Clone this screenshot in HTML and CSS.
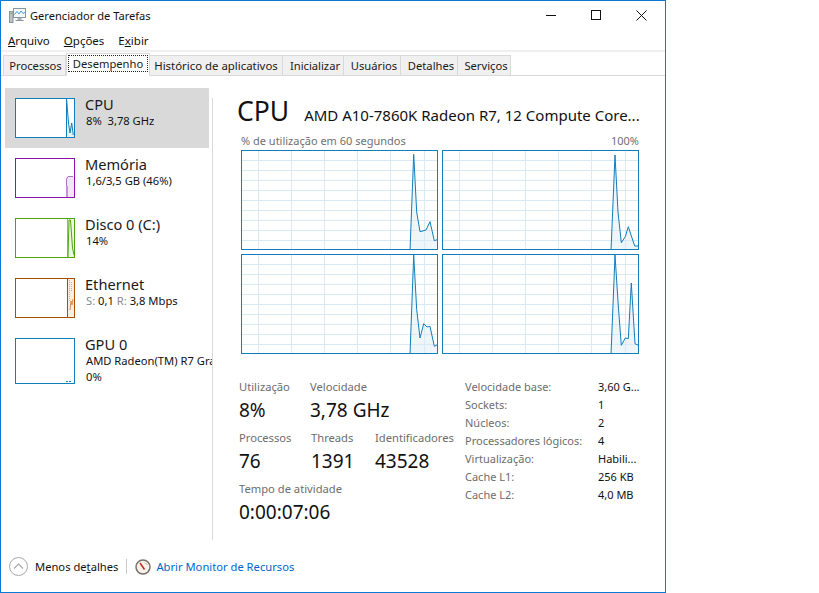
FILE: index.html
```html
<!DOCTYPE html>
<html lang="pt-BR">
<head>
<meta charset="utf-8">
<title>Gerenciador de Tarefas</title>
<link rel="stylesheet" href="styles.css">
</head>
<body>
<svg class="defs" width="0" height="0" aria-hidden="true">
  <defs>
    <g id="grid-lines">
      <path d="M16.500 0V101M49.500 0V101M82.500 0V101M115.500 0V101M148.500 0V101M182.500 0V101" stroke="#d9eaf4" fill="none"/>
      <path d="M0 9.500H197M0 19.500H197M0 29.500H197M0 39.500H197M0 49.500H197M0 59.500H197M0 69.500H197M0 79.500H197M0 89.500H197" stroke="#d9eaf4" fill="none"/>
    </g>
  </defs>
</svg>
<div class="window">
  <header class="titlebar">
    <svg class="app-icon" width="17" height="15" viewBox="0 0 17 15">
      <rect x="4.500" y="0.500" width="12" height="9" fill="#f4f9fc" stroke="#8a949a"/>
      <path d="M5.500 6.500 8 3.500l2 2.500 2-3 2 2.500 2-1" fill="none" stroke="#4f9fd0"/>
      <path d="M8.500 10h4v2h-4z" fill="#a8b0b5"/>
      <path d="M6.500 12.500h8" stroke="#8a949a"/>
      <rect x="0.500" y="3.500" width="3.500" height="11" fill="#b9c3c8" stroke="#8a949a"/>
      <path d="M1.500 5.500h1.500" stroke="#6fae3c"/>
    </svg>
    <span class="title">Gerenciador de Tarefas</span>
    <div class="caption">
      <svg width="10" height="10" viewBox="0 0 10 10"><path d="M0 5.500H10" stroke="#111"/></svg>
      <svg width="10" height="10" viewBox="0 0 10 10"><rect x=".5" y=".5" width="9" height="9" fill="none" stroke="#111"/></svg>
      <svg width="11" height="11" viewBox="0 0 11 11"><path d="M.5 .5l10 10M10.500 .5l-10 10" stroke="#111" fill="none"/></svg>
    </div>
  </header>
  <nav class="menubar">
    <span><u>A</u>rquivo</span>
    <span><u>O</u>pções</span>
    <span>E<u>x</u>ibir</span>
  </nav>
  <div class="tabs">
    <div class="tab tab-w1">Processos</div>
    <div class="tab tab-active"><span class="focus">Desempenho</span></div>
    <div class="tab tab-w3">Histórico de aplicativos</div>
    <div class="tab tab-w4">Inicializar</div>
    <div class="tab tab-w5">Usuários</div>
    <div class="tab tab-w5">Detalhes</div>
    <div class="tab tab-w7">Serviços</div>
  </div>
  <main class="content">
    <aside class="sidebar">
      <div class="item item-selected">
        <svg class="mini cpu" width="60" height="40" viewBox="1 1 58 38">
          <path d="M51 39V0L53 25 55 35 56.700 25 58.300 37H59V39Z" fill="#e6f1f8" stroke="none"/>
          <path d="M51.500 39V0L53.500 25 55 35 56.700 25 58.300 37" fill="none" stroke="#117dbb"/>
        </svg>
        <div class="info"><div class="name">CPU</div><div class="sub">8%&nbsp; 3,78 GHz</div></div>
      </div>
      <div class="item">
        <svg class="mini mem" width="60" height="40" viewBox="1 1 58 38">
          <path d="M51 39V21L53 18.500H59V39Z" fill="#f1e6f5" stroke="none"/>
          <path d="M51.500 39V21L53 18.500H58" fill="none" stroke="#b06fc8"/>
          <path d="M52 39V28" stroke="#c890db" stroke-width="2" fill="none"/>
        </svg>
        <div class="info"><div class="name">Memória</div><div class="sub">1,6/3,5 GB (46%)</div></div>
      </div>
      <div class="item">
        <svg class="mini disk" width="60" height="40" viewBox="1 1 58 38">
          <path d="M52 0H59V39H52Z" fill="#edf6e5" stroke="none"/>
          <path d="M52.500 39V0" stroke="#8cc35f" fill="none"/>
          <path d="M53 39 54 2H55.500L57.500 30 59 37" fill="none" stroke="#4da60c"/>
        </svg>
        <div class="info"><div class="name">Disco 0 (C:)</div><div class="sub">14%</div></div>
      </div>
      <div class="item">
        <svg class="mini eth" width="60" height="40" viewBox="1 1 58 38">
          <path d="M52 1H59V39H52Z" fill="#f9eee4" stroke="none"/>
          <path d="M52.500 0V40" stroke="#a74f01" fill="none"/>
          <path d="M54.500 2V24M56.500 4V14" stroke="#e0a87c" stroke-dasharray="1 1" fill="none"/>
          <path d="M55 32 56 23 57 27 58 21" stroke="#d98b50" fill="none"/>
        </svg>
        <div class="info"><div class="name">Ethernet</div><div class="sub"><span class="dim">S:</span> 0,1 <span class="dim">R:</span> 3,8 Mbps</div></div>
      </div>
      <div class="item item-gpu">
        <svg class="mini gpu" width="60" height="46" viewBox="1 1 58 44">
          <path d="M51 43.500H53M54 43.500H56" stroke="#117dbb" fill="none"/>
        </svg>
        <div class="info"><div class="name">GPU 0</div><div class="sub">AMD Radeon(TM) R7 Graphics</div><div class="sub">0%</div></div>
      </div>
    </aside>
    <div class="divider"></div>
    <section class="detail">
      <div class="heading">
        <h1>CPU</h1>
        <span class="model">AMD A10-7860K Radeon R7, 12 Compute Core...</span>
      </div>
      <div class="graph-caption"><span>% de utilização em 60 segundos</span><span>100%</span></div>
      <div class="graphs">
        <svg class="graph" width="197" height="100" viewBox="0 0 195 98">
          <use href="#grid-lines"/>
          <path d="M168 100 171.700 3.300 174.700 61 178 80.700 184 79 188 70.700 192.300 89.700 197 88V100Z" class="fill"/>
          <path d="M168 100 171.700 3.300 174.700 61 178 80.700 184 79 188 70.700 192.300 89.700 197 88" class="line"/>
        </svg>
        <svg class="graph" width="197" height="100" viewBox="0 0 195 98">
          <use href="#grid-lines"/>
          <path d="M168 100 172 4 175 61 178.300 91.700 182.300 85.700 185.300 75.700 191.700 95 197 95V100Z" class="fill"/>
          <path d="M168 100 172 4 175 61 178.300 91.700 182.300 85.700 185.300 75.700 191.700 95 197 95" class="line"/>
        </svg>
        <svg class="graph" width="197" height="100" viewBox="0 0 195 98">
          <use href="#grid-lines"/>
          <path d="M168 100 171.700 0 174.700 54.700 178 83 181.700 68.700 185 72 188 71.300 192.300 91.300 197 89V100Z" class="fill"/>
          <path d="M168 100 171.700 0 174.700 54.700 178 83 181.700 68.700 185 72 188 71.300 192.300 91.300 197 89" class="line"/>
        </svg>
        <svg class="graph" width="197" height="100" viewBox="0 0 195 98">
          <use href="#grid-lines"/>
          <path d="M168 100 172 0 175.300 51 178.300 90.300 182.300 83 185.300 83.700 188.300 28 192 88.700 197 91V100Z" class="fill"/>
          <path d="M168 100 172 0 175.300 51 178.300 90.300 182.300 83 185.300 83.700 188.300 28 192 88.700 197 91" class="line"/>
        </svg>
      </div>
      <div class="stats">
        <div class="live">
          <div class="stat-row">
            <div class="stat s1"><div class="label">Utilização</div><div class="value">8%</div></div>
            <div class="stat"><div class="label">Velocidade</div><div class="value">3,78 GHz</div></div>
          </div>
          <div class="stat-row">
            <div class="stat s1b"><div class="label">Processos</div><div class="value">76</div></div>
            <div class="stat s2"><div class="label">Threads</div><div class="value">1391</div></div>
            <div class="stat"><div class="label">Identificadores</div><div class="value">43528</div></div>
          </div>
          <div class="stat-row">
            <div class="stat"><div class="label">Tempo de atividade</div><div class="value">0:00:07:06</div></div>
          </div>
        </div>
        <dl class="props">
          <dt>Velocidade base:</dt><dd>3,60 G...</dd>
          <dt>Sockets:</dt><dd>1</dd>
          <dt>Núcleos:</dt><dd>2</dd>
          <dt>Processadores lógicos:</dt><dd>4</dd>
          <dt>Virtualização:</dt><dd>Habili...</dd>
          <dt>Cache L1:</dt><dd>256 KB</dd>
          <dt>Cache L2:</dt><dd>4,0 MB</dd>
        </dl>
      </div>
    </section>
  </main>
  <footer class="footer">
    <svg class="chevron" width="19" height="19" viewBox="0 0 19 19">
      <circle cx="9.500" cy="9.500" r="9" fill="#fff" stroke="#a8a8a8"/>
      <path d="M5 11.500 9.500 7 14 11.500" fill="none" stroke="#a8a8a8" stroke-width="1.200"/>
    </svg>
    <span class="less">Menos de<u>t</u>alhes</span>
    <span class="sep"></span>
    <svg class="gauge" width="16" height="16" viewBox="0 0 16 16">
      <circle cx="8" cy="8" r="7" fill="#f7f3ec" stroke="#77716a" stroke-width="1.500"/>
      <path d="M5 4 9.500 10.500" stroke="#c8281e" stroke-width="1.500"/>
      <path d="M10 3.500 12.500 6" stroke="#c4a98a"/>
    </svg>
    <a class="link">Abrir Monitor de Recursos</a>
  </footer>
</div>
</body>
</html>
```
FILE: styles.css
```css
* { box-sizing: border-box; }
html, body { margin: 0; padding: 0; background: #fff; }
body {
  width: 819px;
  height: 593px;
  overflow: hidden;
  font-family: "Noto Sans", "Open Sans", sans-serif;
  font-size: 11.2px;
  color: #111;
}
.defs { position: absolute; }
.window {
  width: 666px;
  height: 593px;
  border: 1px solid #0a7ad6;
  display: flex;
  flex-direction: column;
}
.titlebar {
  height: 30px;
  display: flex;
  align-items: center;
  padding: 0 0 2px 8px;
}
.app-icon { margin-right: 4px; }
.title { font-size: 11.1px; }
.caption {
  margin-left: auto;
  width: 120px;
  padding: 9px 18px 0 1px;
  display: flex;
  justify-content: space-between;
  align-items: flex-start;
  align-self: flex-start;
  height: 30px;
}
.menubar {
  height: 19px;
  display: flex;
  align-items: center;
  gap: 14px;
  padding-left: 7px;
  font-size: 11.5px;
}
.tabs {
  height: 26px;
  border-top: 2px solid #f0f0f0;
  border-bottom: 1px solid #dadada;
  display: flex;
  align-items: flex-end;
  padding-left: 2px;
}
.tab {
  height: 21px;
  margin-bottom: -1px;
  padding-left: 2px;
  background: #f0f0f0;
  border: 1px solid #d9d9d9;
  border-left-width: 0;
  display: flex;
  align-items: center;
  justify-content: center;
  white-space: nowrap;
  color: #1a1a1a;
}
.tab-w1 { width: 63px; border-left-width: 1px; }
.tab-active {
  width: 84px;
  height: 23px;
  padding-left: 0;
  background: #fff;
  border-left-width: 1px;
  border-bottom-color: #fff;
  align-items: flex-start;
  padding-top: 1px;
}
.focus { border: 1px dotted #222; padding: 0 4px; line-height: 15px; height: 17px; }
.tab-w3 { width: 133px; padding-left: 0; font-size: 11.4px; }
.tab-w4 { width: 61px; padding-left: 4px; }
.tab-w5 { width: 57px; padding-left: 4px; }
.tab-w7 { width: 53px; padding-left: 4px; }
.content {
  flex: 1;
  display: flex;
  min-height: 0;
}
.sidebar {
  width: 211px;
  margin-top: 12px;
  padding-left: 4px;
  flex: none;
  height: 453px;
  overflow: hidden;
}
.divider {
  flex: none;
  width: 1px;
  height: 442px;
  margin-top: 22px;
  background: #d9d9d9;
}
.item {
  height: 60px;
  display: flex;
  align-items: flex-start;
  padding: 10px 0 0 10px;
  width: 204px;
}
.item-gpu { height: 70px; width: 207px; }
.item-selected { background: #d9d9d9; }
.mini { flex: none; background: #fff; border: 1px solid; margin-right: 10px; overflow: hidden; }
.mini.cpu { border-color: #117dbb; }
.mini.mem { border-color: #8b12ae; }
.mini.disk { border-color: #4da60c; }
.mini.eth { border-color: #a74f01; }
.mini.gpu { border-color: #117dbb; }
.info { min-width: 0; overflow: hidden; white-space: nowrap; margin-top: -3px; }
.name { font-size: 14.6px; line-height: 18px; color: #1a1a1a; }
.sub { font-size: 11.2px; line-height: 16px; margin-left: 1px; }
.dim { color: #8a8a8a; }
.detail {
  flex: 1;
  padding: 17px 26px 0 26px;
  min-width: 0;
}
.heading { display: flex; align-items: baseline; height: 36px; margin-left: -2px; }
h1 { font-size: 26.5px; font-weight: 400; margin: 0 15px 0 0; line-height: 36px; }
.model { font-size: 15px; white-space: nowrap; }
.graph-caption {
  display: flex;
  justify-content: space-between;
  font-size: 11px;
  color: #707070;
  height: 15px;
  line-height: 14px;
  padding: 0 0 0 2px;
  margin-top: 5px;
}
.graphs {
  display: grid;
  grid-template-columns: 197px 197px;
  grid-auto-rows: 100px;
  gap: 4px;
  margin-left: 2px;
  margin-top: 1px;
}
.graph { display: block; border: 1px solid #117dbb; overflow: hidden; }
.fill { fill: #d9eaf4; fill-opacity: .45; stroke: none; }
.line { fill: none; stroke: #117dbb; stroke-width: 1; }
.stats { display: flex; margin-top: 25px; }
.live { width: 226px; flex: none; }
.stat-row { display: flex; height: 51px; }
.stat { flex: none; }
.s1 { width: 71px; }
.s1b { width: 72px; }
.s2 { width: 64px; }
.label { font-size: 11.2px; color: #6d6d6d; line-height: 16px; margin-bottom: 2px; }
.value { font-size: 19px; line-height: 26px; color: #111; }
.props {
  margin: 0;
  display: grid;
  grid-template-columns: 133px auto;
  grid-auto-rows: 18px;
  font-size: 11px;
  line-height: 16px;
  align-content: start;
}
dt { color: #6d6d6d; white-space: nowrap; }
dd { margin: 0; white-space: nowrap; }
.footer {
  height: 51px;
  display: flex;
  align-items: center;
  padding: 0 0 0 8px;
  margin-top: auto;
}
.less { margin-left: 7px; }
.sep { width: 1px; height: 15px; background: #c8c8c8; margin: 0 8px; }
.link { color: #0066cc; margin-left: 5px; }
```
